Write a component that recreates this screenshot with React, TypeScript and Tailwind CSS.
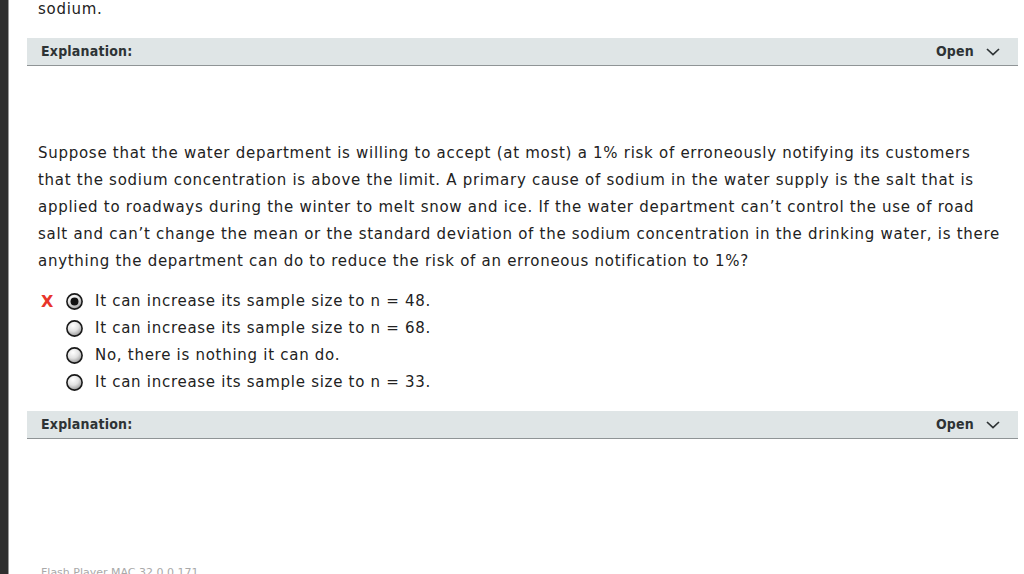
import React from "react";

function Radio({ checked }: { checked?: boolean }) {
  const id = checked ? "rg1" : "rg0";
  return (
    <svg width="17" height="17" viewBox="0 0 17 17" className="shrink-0">
      <defs>
        <radialGradient id={id} cx="40%" cy="30%" r="75%">
          <stop offset="0%" stopColor="#ffffff" />
          <stop offset="50%" stopColor="#e2e2e2" />
          <stop offset="100%" stopColor="#8f8f8f" />
        </radialGradient>
      </defs>
      <circle cx="8.5" cy="8.5" r="7.6" fill={`url(#${id})`} stroke="#1a1a1a" strokeWidth="1.6" />
      {checked && <circle cx="8.5" cy="8.5" r="4" fill="#111" />}
    </svg>
  );
}

function Header() {
  return (
    <div className="h-[28px] bg-[#dfe5e6] border-b border-[#8f9496] flex items-center justify-between pl-[14px] pr-[18px] font-['DejaVu_Sans_Condensed','DejaVu_Sans',sans-serif] tracking-[0.2px]">
      <span className="text-[14px] font-bold text-[#2e3335]">Explanation:</span>
      <span className="flex items-center gap-[12px] text-[14px] font-bold text-[#2e3335]">
        Open
        <svg width="14" height="8" viewBox="0 0 14 8">
          <path d="M1 1 L7 6.7 L13 1" fill="none" stroke="#2e3335" strokeWidth="1.7" />
        </svg>
      </span>
    </div>
  );
}

const options = [
  "It can increase its sample size to n = 48.",
  "It can increase its sample size to n = 68.",
  "No, there is nothing it can do.",
  "It can increase its sample size to n = 33.",
];

export default function App() {
  return (
    <div className="w-[1024px] h-[574px] overflow-hidden flex bg-white">
      <div className="w-[8px] shrink-0 bg-[#2f2f2f]" />
      <div className="w-[1px] shrink-0 bg-[#9a9a9a]" />
      <div className="flex-1 flex flex-col pl-[18px] pr-[6px] text-[#222] font-['DejaVu_Sans',Verdana,sans-serif] tracking-[0.72px]">
        <div className="pl-[11px] text-[15px] leading-[18px]">sodium.</div>
        <div className="mt-[20px]">
          <Header />
        </div>
        <p className="mt-[74px] pl-[11px] text-[15px] leading-[27px] whitespace-nowrap">
          Suppose that the water department is willing to accept (at most) a 1% risk of erroneously notifying its customers
          <br />
          that the sodium concentration is above the limit. A primary cause of sodium in the water supply is the salt that is
          <br />
          applied to roadways during the winter to melt snow and ice. If the water department can’t control the use of road
          <br />
          salt and can’t change the mean or the standard deviation of the sodium concentration in the drinking water, is there
          <br />
          anything the department can do to reduce the risk of an erroneous notification to 1%?
        </p>
        <div className="mt-[13px] flex flex-col">
          {options.map((o, i) => (
            <div key={i} className="h-[27px] flex items-center">
              <span className="w-[39px] pl-[14px] text-[#e8342a] font-bold text-[16px] leading-none">
                {i === 0 ? "X" : ""}
              </span>
              <Radio checked={i === 0} />
              <span className="ml-[12px] text-[15px]">{o}</span>
            </div>
          ))}
        </div>
        <div className="mt-[15px]">
          <Header />
        </div>
        <div className="mt-[126px] pl-[14px] text-[11px] text-[#a9a9a9] shrink-0 tracking-normal">
          Flash Player MAC 32.0.0.171
        </div>
      </div>
    </div>
  );
}
